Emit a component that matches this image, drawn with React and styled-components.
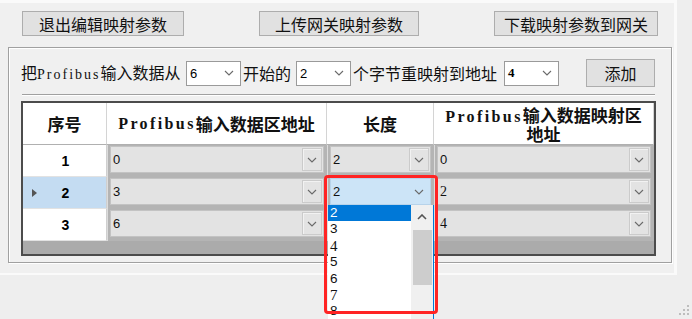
import React from 'react'
import styled, { createGlobalStyle } from 'styled-components'

const GlobalStyle = createGlobalStyle`
  * { box-sizing: border-box; }
  html, body { margin: 0; padding: 0; background: #f0f0f0; }
  body { font-family: "Noto Sans CJK SC", "Liberation Sans", sans-serif; color: #000; }
`

const Window = styled.div`
  position: relative;
  width: 692px;
  height: 319px;
  overflow: hidden;
  background: #eeeeee;
  display: flex;
  flex-direction: column;
`

const Body = styled.div`
  flex: none;
  width: 677px;
  height: 275px;
  background: #f0f0f0;
  border-top: 3px solid #fafafa;
  border-right: 3px solid #fafafa;
  border-bottom: 2px solid #fafafa;
  padding-top: 8px;
  display: flex;
  flex-direction: column;
`

const Toolbar = styled.div`
  display: flex;
  justify-content: space-between;
  padding: 0 16px 0 22px;
`

const Button = styled.button`
  width: ${p => p.$w}px;
  height: ${p => p.$h || 25}px;
  margin-left: ${p => p.$ml || 0}px;
  padding: 0;
  background: #e1e1e1;
  border: 1px solid #adadad;
  font-family: "Noto Sans CJK SC", sans-serif;
  font-size: 16px;
  line-height: 20px;
  color: #111;
  text-align: center;
`

const Group = styled.div`
  margin: 11px 0 0 8px;
  width: 664px;
  height: 216px;
  border: 1px solid #a0a0a0;
  box-shadow: inset 1px 1px 0 #ffffff, 1px 1px 0 #ffffff;
  padding: 11px 0 0 12px;
  display: flex;
  flex-direction: column;
`

const ControlRow = styled.div`
  display: flex;
  align-items: center;
  height: 28px;
`

const Label = styled.div`
  width: ${p => p.$w}px;
  padding-left: ${p => p.$pl || 0}px;
  font-family: "Noto Sans CJK SC", sans-serif;
  font-size: 16px;
  line-height: 20px;
  white-space: nowrap;
  color: #111;
`

const Latin = styled.span`
  font-family: "Liberation Serif", serif;
  font-size: ${p => (p.$bold ? 16 : 14)}px;
  font-weight: ${p => (p.$bold ? 700 : 400)};
  letter-spacing: ${p => (p.$bold ? 2.4 : 2)}px;
`

const Combo = styled.div`
  width: 55px;
  height: 25px;
  background: #fff;
  border: 1px solid #9a9a9a;
  display: flex;
  align-items: center;
  justify-content: space-between;
  padding: 0 6px 0 3px;
  font-family: ${p => (p.$serif ? '"Liberation Serif", serif' : '"Liberation Sans", sans-serif')};
  font-weight: ${p => (p.$serif ? 700 : 400)};
  font-size: 13px;
`

const Separator = styled.div`
  margin: 7px 0 0 1px;
  width: 633px;
  height: 2px;
  border-top: 1px solid #a0a0a0;
  border-bottom: 1px solid #ffffff;
`

const Grid = styled.div`
  margin-top: 5px;
  width: 635px;
  height: 155px;
  border: 2px solid #4c4c4c;
  background: #ababab;
  display: grid;
  grid-template-columns: 84px 220px 107px 220px;
  grid-template-rows: 42px repeat(3, 32px);
  align-content: start;
`

const HeaderCell = styled.div`
  background: #fff;
  border-right: 1px solid #d4d4d4;
  border-bottom: 1px solid #b0b0b0;
  display: flex;
  align-items: center;
  justify-content: center;
  text-align: center;
  font-family: "Noto Sans CJK SC", sans-serif;
  font-weight: 700;
  font-size: 17px;
  line-height: 17px;
  white-space: nowrap;
  color: #111;
`

const RowHeader = styled.div`
  position: relative;
  background: ${p => (p.$selected ? '#c4dcf2' : '#ffffff')};
  border-right: 1px solid #cfcfcf;
  border-bottom: 1px solid #e2e2e2;
  display: flex;
  align-items: center;
  justify-content: center;
  font-family: "Liberation Sans", sans-serif;
  font-weight: 700;
  font-size: 14px;
  padding-left: 2px;
`

const RowMarker = styled.span`
  position: absolute;
  left: 9px;
  top: 12px;
  width: 0;
  height: 0;
  border-left: 5px solid #555;
  border-top: 4px solid transparent;
  border-bottom: 4px solid transparent;
`

const DataCell = styled.div`
  background: #b4b4b4;
  padding: 1px 3px 4px 2px;
  border-left: 1px solid #dcdcdc;
`

const CellCombo = styled.div`
  height: 100%;
  background: ${p => (p.$active ? '#cce4f7' : '#e3e3e3')};
  border: 1px solid ${p => (p.$active ? '#b7d3ea' : '#c3c3c3')};
  display: flex;
  align-items: center;
  justify-content: space-between;
  padding: 0 1px 0 2px;
  font-family: ${p => (p.$serif ? '"Liberation Serif", serif' : '"Liberation Sans", sans-serif')};
  font-size: ${p => (p.$serif ? 14 : 13)}px;
  color: #111;
`

const DropButton = styled.div`
  width: 20px;
  height: 23px;
  border: 1px solid ${p => (p.$active ? '#cce4f7' : '#cbcbcb')};
  box-shadow: ${p => (p.$active ? 'none' : 'inset 1px 1px 0 #f2f2f2')};
  display: flex;
  align-items: center;
  justify-content: center;
`

const Status = styled.div`
  flex: 1;
  display: flex;
  justify-content: flex-end;
  align-items: flex-end;
  padding: 0 2px 3px 0;
`

const DropList = styled.div`
  position: absolute;
  left: 328px;
  top: 205px;
  width: 106px;
  height: 120px;
  background: #fff;
  border-right: 1px solid #0078d7;
  display: flex;
`

const ListItems = styled.div`
  flex: 1;
  display: flex;
  flex-direction: column;
`

const ListItem = styled.div`
  height: 16.4px;
  line-height: 16.4px;
  padding-left: 2px;
  overflow: hidden;
  background: ${p => (p.$selected ? '#0078d7' : 'transparent')};
  color: ${p => (p.$selected ? '#fff' : '#111')};
  font-family: ${p => (p.$serif ? '"Liberation Serif", serif' : '"Liberation Sans", sans-serif')};
  font-size: ${p => (p.$serif ? 15 : 13.5)}px;
`

const ScrollTrack = styled.div`
  width: 22px;
  background: #f0f0f0;
  display: flex;
  flex-direction: column;
  align-items: center;
`

const ScrollArrow = styled.div`
  height: 23px;
  display: flex;
  align-items: center;
  justify-content: center;
`

const ScrollThumb = styled.div`
  margin-top: 2px;
  width: 19px;
  height: 55px;
  background: #cdcdcd;
`

const Highlight = styled.div`
  position: absolute;
  left: 324px;
  top: 175px;
  width: 114px;
  height: 139px;
  border: 3px solid #ff2424;
  border-radius: 4px;
`

const Chevron = ({ up, color = '#6a6a6a', w = 1.1 }) => (
  <svg width="10" height="6" viewBox="0 0 10 6">
    <polyline
      points={up ? '1,5 5,1 9,5' : '1,1 5,5 9,1'}
      fill="none"
      stroke={color}
      strokeWidth={w}
    />
  </svg>
)

const Grip = () => (
  <svg width="12" height="12" viewBox="0 0 12 12">
    {[[9, 1], [9, 5], [5, 5], [9, 9], [5, 9], [1, 9]].map(([x, y]) => (
      <rect key={`${x}-${y}`} x={x} y={y} width="2" height="2" fill="#bdbdbd" />
    ))}
  </svg>
)

const rows = [
  { no: '1', addr: '0', len: '2', map: '0' },
  { no: '2', addr: '3', len: '2', map: '2', selected: true },
  { no: '3', addr: '6', len: '2', map: '4' },
]

export default function App() {
  return (
    <Window>
      <GlobalStyle />
      <Body>
        <Toolbar>
          <Button $w={162}>退出编辑映射参数</Button>
          <Button $w={160}>上传网关映射参数</Button>
          <Button $w={164}>下载映射参数到网关</Button>
        </Toolbar>
        <Group>
          <ControlRow>
            <Label $w={165}>把<Latin>Profibus</Latin>输入数据从</Label>
            <Combo>6<Chevron /></Combo>
            <Label $w={55} $pl={2}>开始的</Label>
            <Combo>2<Chevron /></Combo>
            <Label $w={153} $pl={2}>个字节重映射到地址</Label>
            <Combo $serif>4<Chevron /></Combo>
            <Button $w={69} $h={28} $ml={27}>添加</Button>
          </ControlRow>
          <Separator />
          <Grid>
            <HeaderCell>序号</HeaderCell>
            <HeaderCell><Latin $bold>Profibus</Latin>输入数据区地址</HeaderCell>
            <HeaderCell>长度</HeaderCell>
            <HeaderCell>
              <span><Latin $bold>Profibus</Latin>输入数据映射区<br />地址</span>
            </HeaderCell>
            {rows.map(r => (
              <React.Fragment key={r.no}>
                <RowHeader $selected={r.selected}>
                  {r.selected && <RowMarker />}
                  {r.no}
                </RowHeader>
                <DataCell>
                  <CellCombo>{r.addr}<DropButton><Chevron /></DropButton></CellCombo>
                </DataCell>
                <DataCell>
                  <CellCombo $active={r.selected}>
                    {r.len}
                    <DropButton $active={r.selected}><Chevron /></DropButton>
                  </CellCombo>
                </DataCell>
                <DataCell>
                  <CellCombo $serif={r.no !== '1'}>{r.map}<DropButton><Chevron /></DropButton></CellCombo>
                </DataCell>
              </React.Fragment>
            ))}
          </Grid>
        </Group>
      </Body>
      <Status>
        <Grip />
      </Status>
      <DropList>
        <ListItems>
          <ListItem $selected>2</ListItem>
          <ListItem>3</ListItem>
          <ListItem $serif>4</ListItem>
          <ListItem>5</ListItem>
          <ListItem>6</ListItem>
          <ListItem $serif>7</ListItem>
          <ListItem>8</ListItem>
        </ListItems>
        <ScrollTrack>
          <ScrollArrow><Chevron up color="#555" w={1.6} /></ScrollArrow>
          <ScrollThumb />
        </ScrollTrack>
      </DropList>
      <Highlight />
    </Window>
  )
}
